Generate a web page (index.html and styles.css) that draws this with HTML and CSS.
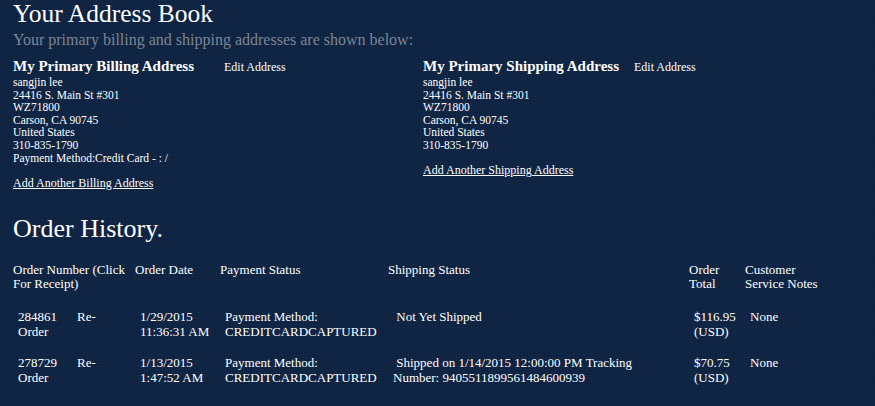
FILE: index.html
```html
<!DOCTYPE html>
<html lang="en">
<head>
<meta charset="utf-8">
<title>Your Address Book</title>
<link rel="stylesheet" href="styles.css">
</head>
<body>
<div class="page">
  <h1 class="page-title">Your Address Book</h1>
  <p class="subtitle">Your primary billing and shipping addresses are shown below:</p>

  <div class="addresses">
    <div class="address">
      <div class="address-head">
        <span class="address-title">My Primary Billing Address</span>
        <a class="edit-link" href="#">Edit Address</a>
      </div>
      <div class="address-lines">
        <div>sangjin lee</div>
        <div>24416 S. Main St #301</div>
        <div>WZ71800</div>
        <div>Carson, CA 90745</div>
        <div>United States</div>
        <div>310-835-1790</div>
        <div>Payment Method:Credit Card - : /</div>
      </div>
      <a class="add-link" href="#">Add Another Billing Address</a>
    </div>
    <div class="address">
      <div class="address-head">
        <span class="address-title">My Primary Shipping Address</span>
        <a class="edit-link" href="#">Edit Address</a>
      </div>
      <div class="address-lines">
        <div>sangjin lee</div>
        <div>24416 S. Main St #301</div>
        <div>WZ71800</div>
        <div>Carson, CA 90745</div>
        <div>United States</div>
        <div>310-835-1790</div>
      </div>
      <a class="add-link" href="#">Add Another Shipping Address</a>
    </div>
  </div>

  <h2 class="section-title">Order History.</h2>

  <table class="orders">
    <colgroup>
      <col class="c-num">
      <col class="c-re">
      <col class="c-date">
      <col class="c-pay">
      <col class="c-ship">
      <col class="c-total">
      <col class="c-notes">
    </colgroup>
    <thead>
      <tr>
        <th colspan="2">Order Number (Click For Receipt)</th>
        <th>Order Date</th>
        <th>Payment Status</th>
        <th>Shipping Status</th>
        <th>Order Total</th>
        <th>Customer Service Notes</th>
      </tr>
    </thead>
    <tbody>
      <tr>
        <td>284861 Order</td>
        <td>Re-</td>
        <td>1/29/2015 11:36:31 AM</td>
        <td>Payment Method: CREDITCARDCAPTURED</td>
        <td class="ship">&nbsp;Not Yet Shipped</td>
        <td>$116.95 (USD)</td>
        <td>None</td>
      </tr>
      <tr>
        <td>278729 Order</td>
        <td>Re-</td>
        <td>1/13/2015 1:47:52 AM</td>
        <td>Payment Method: CREDITCARDCAPTURED</td>
        <td class="ship">&nbsp;Shipped on 1/14/2015 12:00:00 PM Tracking Number: 9405511899561484600939</td>
        <td>$70.75 (USD)</td>
        <td>None</td>
      </tr>
    </tbody>
  </table>
</div>
</body>
</html>
```

FILE: styles.css
```css
html, body {
  margin: 0;
  padding: 0;
}

body {
  background-color: #0d2341;
  background-image:
    repeating-linear-gradient(0deg, rgba(255,255,255,0.014) 0 1px, transparent 1px 3px),
    repeating-linear-gradient(90deg, rgba(255,255,255,0.014) 0 1px, transparent 1px 3px);
  color: #ffffff;
  font-family: "Liberation Serif", "Times New Roman", serif;
  min-height: 406px;
}

.page {
  padding: 0 13px;
}

.page-title {
  margin: 0 0 1.5px;
  font-size: 25.5px;
  line-height: 28.5px;
  font-weight: normal;
}

.subtitle {
  margin: 0 0 7px;
  font-size: 16px;
  line-height: 20px;
  color: #7b8594;
}

.addresses {
  display: flex;
}

.address {
  width: 410px;
  display: flex;
  flex-direction: column;
  align-items: flex-start;
}

.address-head {
  display: flex;
  align-items: baseline;
  gap: 8px;
}

.address-title {
  min-width: 203px;
  font-size: 15px;
  line-height: 18px;
  font-weight: bold;
}

.edit-link {
  color: #ffffff;
  text-decoration: none;
  font-size: 12px;
  line-height: 18px;
}

.address-lines {
  font-size: 11.5px;
  line-height: 12.6px;
}

.add-link {
  margin-top: 12.5px;
  color: #ffffff;
  font-size: 12px;
  line-height: 13px;
  text-decoration: underline;
}

.section-title {
  margin: 25.5px 0 0;
  font-size: 26px;
  line-height: 28px;
  font-weight: normal;
}

.orders {
  margin-top: 19.7px;
  width: 812px;
  table-layout: fixed;
  border-collapse: collapse;
  font-size: 13px;
}

.c-num { width: 59px; }
.c-re { width: 63px; }
.c-date { width: 85px; }
.c-pay { width: 168px; }
.c-ship { width: 301px; }
.c-total { width: 56px; }
.c-notes { width: 80px; }

.orders th {
  padding: 0 0 9px 0;
  text-align: left;
  vertical-align: top;
  font-weight: normal;
  line-height: 14.5px;
}

.orders td {
  padding: 8px 0 8px 5px;
  vertical-align: top;
  line-height: 15px;
}

.orders td.ship {
  padding-right: 15px;
}
```
